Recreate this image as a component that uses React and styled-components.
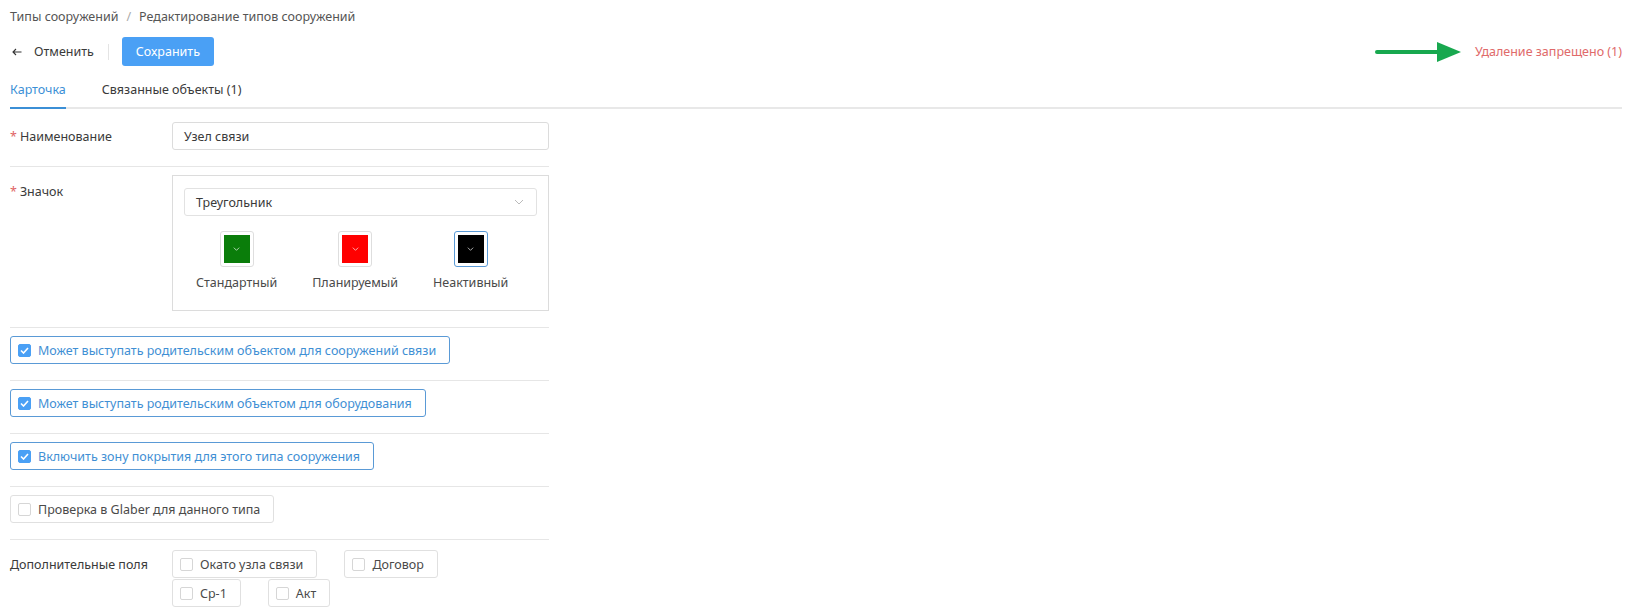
import React from "react";
import styled, { createGlobalStyle } from "styled-components";

const Global = createGlobalStyle`
  html, body { margin: 0; padding: 0; background: #fff; }
  body {
    font-family: "Noto Sans", "Open Sans", Arial, sans-serif;
    font-size: 13px;
    color: #3a3a3a;
  }
  * { box-sizing: border-box; }
`;

const Page = styled.div`
  padding: 6px 15px 0 10px;
`;

const Breadcrumbs = styled.div`
  display: flex;
  align-items: center;
  height: 20px;
  color: #555;
  font-size: 12.5px;
  gap: 8px;
`;

const Sep = styled.span`
  color: #aaa;
`;

const Toolbar = styled.div`
  display: flex;
  align-items: center;
  justify-content: space-between;
  margin-top: 11px;
  height: 29px;
`;

const ToolLeft = styled.div`
  display: flex;
  align-items: center;
`;

const CancelBtn = styled.button`
  display: flex;
  align-items: center;
  gap: 12px;
  border: none;
  background: none;
  padding: 0 0 0 2px;
  font: inherit;
  font-size: 12.5px;
  color: #3a3a3a;
  cursor: pointer;
`;

const VDivider = styled.span`
  width: 1px;
  height: 16px;
  background: #e4e4e4;
  margin: 0 13px 0 14px;
`;

const SaveBtn = styled.button`
  height: 29px;
  width: 92px;
  border: none;
  border-radius: 3px;
  background: #4aa0f5;
  color: #fff;
  font: inherit;
  font-size: 12.5px;
  cursor: pointer;
`;

const ToolRight = styled.div`
  display: flex;
  align-items: center;
  gap: 14px;
`;

const Forbidden = styled.span`
  color: #e06a6a;
  font-size: 12.5px;
`;

const Tabs = styled.div`
  display: flex;
  gap: 36px;
  margin-top: 12px;
  border-bottom: 2px solid #e8e8e8;
`;

const Tab = styled.div`
  padding: 3px 0 9px;
  font-size: 12.5px;
  color: ${(p) => (p.$active ? "#3b8fd6" : "#3a3a3a")};
  border-bottom: 2px solid ${(p) => (p.$active ? "#3b8fd6" : "transparent")};
  margin-bottom: -2px;
`;

const Form = styled.div`
  width: 539px;
  margin-top: 5px;
`;

const Row = styled.div`
  display: flex;
  align-items: ${(p) => p.$align || "center"};
  padding: 8px 0 16px;
  border-bottom: ${(p) => (p.$last ? "none" : "1px solid #e6e6e6")};
`;

const Label = styled.div`
  width: 162px;
  flex: none;
  font-size: 12.5px;
  color: #3a3a3a;
  padding-top: ${(p) => p.$pt || 0}px;
`;

const Req = styled.span`
  color: #e06464;
  margin-right: 3px;
`;

const Input = styled.div`
  flex: 1;
  height: 28px;
  border: 1px solid #dcdcdc;
  border-radius: 3px;
  display: flex;
  align-items: center;
  padding: 0 11px;
  font-size: 12.5px;
  color: #3a3a3a;
`;

const IconPanel = styled.div`
  flex: 1;
  border: 1px solid #dcdcdc;
  padding: 12px 11px 19px 11px;
`;

const Select = styled.div`
  height: 28px;
  border: 1px solid #e2e2e2;
  border-radius: 3px;
  display: flex;
  align-items: center;
  justify-content: space-between;
  padding: 0 12px 0 11px;
  font-size: 12.5px;
  color: #3a3a3a;
`;

const Swatches = styled.div`
  display: flex;
  gap: 11px;
  margin-top: 15px;
`;

const SwatchItem = styled.div`
  display: flex;
  flex-direction: column;
  align-items: center;
  padding: 0 12px;
  gap: 7px;
`;

const SwatchBox = styled.div`
  width: 34px;
  height: 36px;
  border: 1px solid ${(p) => (p.$selected ? "#5a9ad6" : "#dedede")};
  border-radius: 3px;
  padding: 3px;
`;

const SwatchFill = styled.div`
  width: 100%;
  height: 100%;
  background: ${(p) => p.$color};
  display: flex;
  align-items: center;
  justify-content: center;
`;

const SwatchLabel = styled.div`
  font-size: 12.5px;
  color: #4a4a4a;
  white-space: nowrap;
`;

const CheckChip = styled.label`
  display: inline-flex;
  align-items: center;
  gap: 7px;
  height: 28px;
  padding: 0 13px 0 7px;
  border: 1px solid ${(p) => (p.$checked ? "#5a9ad6" : "#e0e0e0")};
  border-radius: 3px;
  font-size: 12.5px;
  color: ${(p) => (p.$checked ? "#3f8fd4" : "#4a4a4a")};
  white-space: nowrap;
`;

const Box = styled.span`
  width: 13px;
  height: 13px;
  border-radius: 2px;
  flex: none;
  border: 1px solid ${(p) => (p.$checked ? "#4aa0f5" : "#d6d6d6")};
  background: ${(p) => (p.$checked ? "#4aa0f5" : "#fff")};
  display: flex;
  align-items: center;
  justify-content: center;
`;

const ExtraWrap = styled.div`
  display: flex;
  flex-wrap: wrap;
  width: 330px;
  column-gap: 27px;
  row-gap: 1px;
`;

const ExtraRow = styled(Row)`
  padding-top: 10px;
`;

const Chevron = ({ color = "#bbb", w = 10, h = 6 }) => (
  <svg width={w} height={h} viewBox="0 0 10 6" fill="none">
    <path d="M1 1l4 4 4-4" stroke={color} strokeWidth="1" />
  </svg>
);

const Tick = () => (
  <svg width="9" height="7" viewBox="0 0 9 7" fill="none">
    <path d="M1 3.5l2.5 2.5L8 1" stroke="#fff" strokeWidth="1.6" />
  </svg>
);

const Check = ({ checked, children }) => (
  <CheckChip $checked={checked}>
    <Box $checked={checked}>{checked && <Tick />}</Box>
    {children}
  </CheckChip>
);

const GreenArrow = () => (
  <svg width="86" height="20" viewBox="0 0 86 20">
    <rect x="0" y="8" width="64" height="4" rx="2" fill="#18a84f" />
    <polygon points="62,0 86,10 62,20" fill="#18a84f" />
  </svg>
);

const swatches = [
  { label: "Стандартный", color: "#0a7d0a" },
  { label: "Планируемый", color: "#ff0000" },
  { label: "Неактивный", color: "#000", selected: true },
];

export default function App() {
  return (
    <Page>
      <Global />
      <Breadcrumbs>
        <span>Типы сооружений</span>
        <Sep>/</Sep>
        <span>Редактирование типов сооружений</span>
      </Breadcrumbs>
      <Toolbar>
        <ToolLeft>
          <CancelBtn>
            <svg width="10" height="8" viewBox="0 0 10 8" fill="none">
              <path d="M9.5 4H1M4 1L1 4l3 3" stroke="#333" strokeWidth="1.1" />
            </svg>
            Отменить
          </CancelBtn>
          <VDivider />
          <SaveBtn>Сохранить</SaveBtn>
        </ToolLeft>
        <ToolRight>
          <GreenArrow />
          <Forbidden>Удаление запрещено (1)</Forbidden>
        </ToolRight>
      </Toolbar>
      <Tabs>
        <Tab $active>Карточка</Tab>
        <Tab>Связанные объекты (1)</Tab>
      </Tabs>
      <Form>
        <Row>
          <Label>
            <Req>*</Req>Наименование
          </Label>
          <Input>Узел связи</Input>
        </Row>
        <Row $align="flex-start">
          <Label $pt={8}>
            <Req>*</Req>Значок
          </Label>
          <IconPanel>
            <Select>
              Треугольник
              <Chevron />
            </Select>
            <Swatches>
              {swatches.map((s) => (
                <SwatchItem key={s.label}>
                  <SwatchBox $selected={s.selected}>
                    <SwatchFill $color={s.color}>
                      <Chevron color="#fff" w={7} h={4} />
                    </SwatchFill>
                  </SwatchBox>
                  <SwatchLabel>{s.label}</SwatchLabel>
                </SwatchItem>
              ))}
            </Swatches>
          </IconPanel>
        </Row>
        <Row>
          <Check checked>Может выступать родительским объектом для сооружений связи</Check>
        </Row>
        <Row>
          <Check checked>Может выступать родительским объектом для оборудования</Check>
        </Row>
        <Row>
          <Check checked>Включить зону покрытия для этого типа сооружения</Check>
        </Row>
        <Row>
          <Check>Проверка в Glaber для данного типа</Check>
        </Row>
        <ExtraRow $last $align="flex-start">
          <Label $pt={6}>Дополнительные поля</Label>
          <ExtraWrap>
            <Check>Окато узла связи</Check>
            <Check>Договор</Check>
            <Check>Ср-1</Check>
            <Check>Акт</Check>
          </ExtraWrap>
        </ExtraRow>
      </Form>
    </Page>
  );
}
